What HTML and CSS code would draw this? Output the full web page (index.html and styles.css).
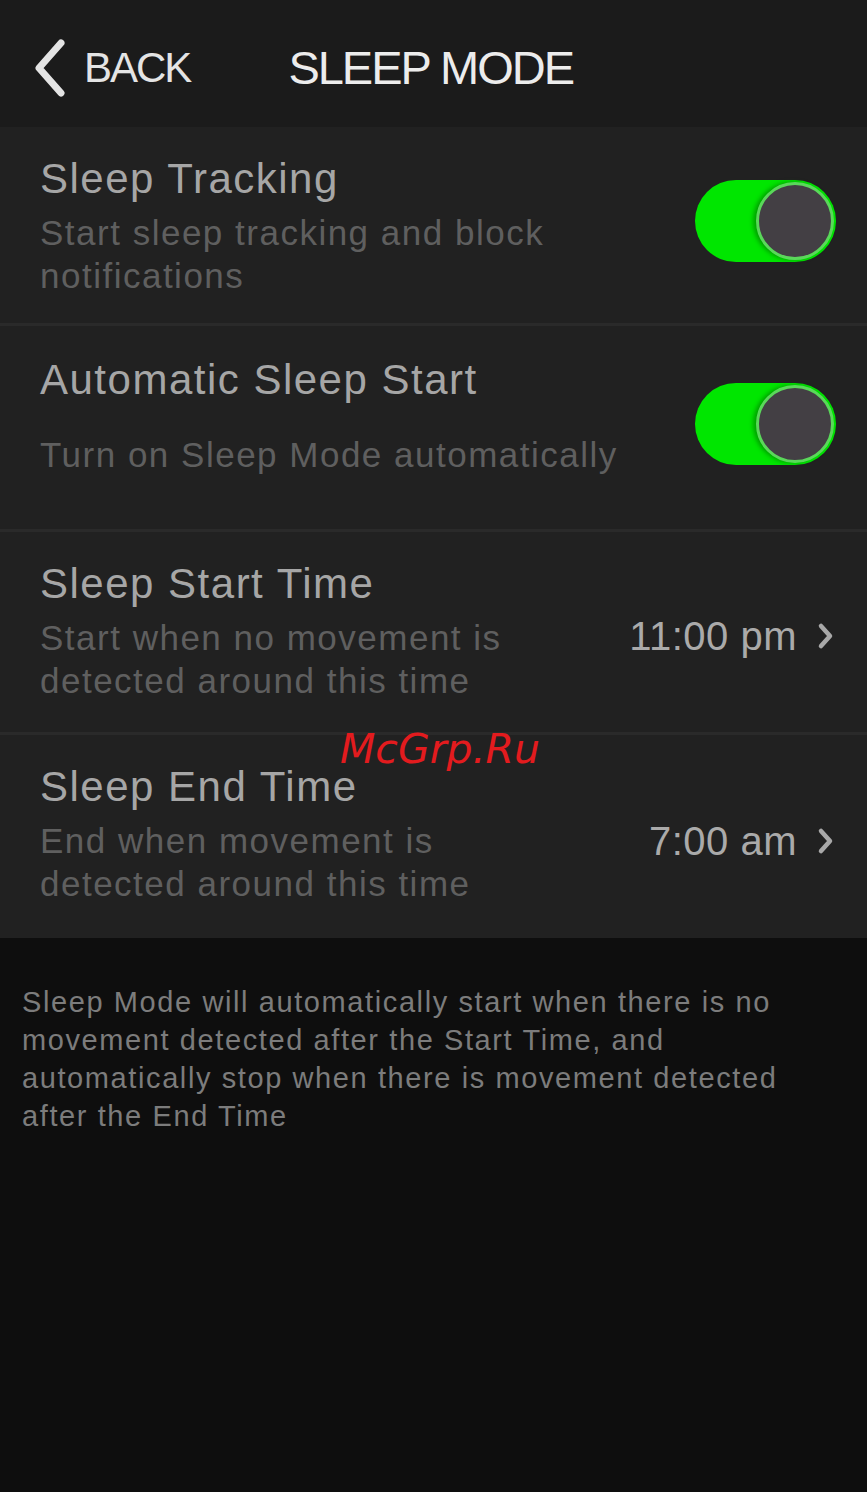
FILE: index.html
```html
<!DOCTYPE html>
<html lang="en">
<head>
    <meta charset="UTF-8" />
    <title>Sleep Mode</title>
    <link rel="stylesheet" href="styles.css">
</head>
<body>
    <div class="nav-bar">
        <a class="back-btn" href="#">
            <svg class="back-icon" width="36" height="58" viewBox="0 0 36 58">
                <path d="M30 4 L8 29 L30 54" fill="none" stroke="#e4e4e4" stroke-width="7" stroke-linecap="round" stroke-linejoin="round" />
            </svg>
            <span>BACK</span>
        </a>
        <h1 class="nav-title">SLEEP MODE</h1>
    </div>

    <div class="settings">
        <div class="setting-row">
            <div class="row-text">
                <div class="row-title">Sleep Tracking</div>
                <div class="row-sub">Start sleep tracking and block notifications</div>
            </div>
            <div class="toggle on"><span class="knob"></span></div>
        </div>

        <div class="setting-row auto-row">
            <div class="row-text">
                <div class="row-title">Automatic Sleep Start</div>
                <div class="row-sub">Turn on Sleep Mode automatically</div>
            </div>
            <div class="toggle on"><span class="knob"></span></div>
        </div>

        <div class="setting-row time-row">
            <div class="row-text">
                <div class="row-title">Sleep Start Time</div>
                <div class="row-sub">Start when no movement is detected around this time</div>
            </div>
            <div class="row-value">
                <span>11:00 pm</span>
                <svg class="chevron" width="18" height="28" viewBox="0 0 18 28">
                    <path d="M4 4 L13 14 L4 24" fill="none" stroke="#a8a8a8" stroke-width="4.5" stroke-linecap="round" stroke-linejoin="round" />
                </svg>
            </div>
        </div>

        <div class="setting-row time-row last-row">
            <div class="row-text">
                <div class="row-title">Sleep End Time</div>
                <div class="row-sub">End when movement is detected around this time</div>
            </div>
            <div class="row-value">
                <span>7:00 am</span>
                <svg class="chevron" width="18" height="28" viewBox="0 0 18 28">
                    <path d="M4 4 L13 14 L4 24" fill="none" stroke="#a8a8a8" stroke-width="4.5" stroke-linecap="round" stroke-linejoin="round" />
                </svg>
            </div>
        </div>

        <div class="watermark">McGrp.Ru</div>
    </div>

    <p class="footnote">Sleep Mode will automatically start when there is no movement detected after the Start Time, and automatically stop when there is movement detected after the End Time</p>
</body>
</html>
```

FILE: styles.css
```css
body {
    margin: 0;
    background: #0e0e0e;
    font-family: "Liberation Sans", Arial, sans-serif;
}

.nav-bar {
    display: flex;
    align-items: center;
    height: 50px;
    padding: 43px 0 34px;
    background: #1b1b1b;
}

.back-btn {
    display: flex;
    align-items: center;
    gap: 17px;
    margin-left: 31px;
    color: #e4e4e4;
    text-decoration: none;
    font-size: 42px;
    line-height: 50px;
    letter-spacing: -2px;
}

.nav-title {
    margin: 0 0 0 98px;
    color: #ececec;
    font-size: 47px;
    line-height: 50px;
    font-weight: normal;
    letter-spacing: -2px;
}

.settings {
    position: relative;
}

.setting-row {
    display: flex;
    align-items: center;
    justify-content: space-between;
    height: 196px;
    padding: 0 31px 0 40px;
    background: #212121;
    border-bottom: 3px solid #2a2a2a;
}

.setting-row.auto-row {
    height: 203px;
}

.setting-row.time-row {
    height: 200px;
}

.setting-row.last-row {
    height: 203px;
    border-bottom: none;
}

.row-text {
    align-self: flex-start;
    padding-top: 28px;
    max-width: 620px;
}

.auto-row .row-text {
    padding-top: 30px;
}

.time-row .row-text {
    max-width: 530px;
}

.row-title {
    color: #a6a6a6;
    font-size: 42px;
    line-height: 48px;
    letter-spacing: 1.5px;
}

.row-sub {
    margin-top: 8px;
    color: #5f5f5f;
    font-size: 35px;
    line-height: 43px;
    letter-spacing: 1.5px;
}

.auto-row .row-sub {
    margin-top: 29px;
}

.toggle {
    display: flex;
    justify-content: flex-end;
    align-items: center;
    width: 141px;
    height: 82px;
    margin-top: -8px;
    padding: 0 2px;
    box-sizing: border-box;
    border-radius: 41px;
    background: #00e600;
}

.knob {
    width: 72px;
    height: 72px;
    border-radius: 50%;
    background: #433f44;
    border: 3px solid #5ad85a;
    box-shadow: -3px 0 4px rgba(0, 90, 0, 0.5);
}

.row-value {
    display: flex;
    align-items: center;
    gap: 20px;
    margin-top: 8px;
    color: #aaaaaa;
    font-size: 40px;
    line-height: 48px;
    letter-spacing: 0.5px;
}

.chevron {
    margin-right: 1px;
}

.watermark {
    position: absolute;
    left: 340px;
    top: 598px;
    color: #e31b1e;
    font-family: "DejaVu Sans", sans-serif;
    font-style: italic;
    font-size: 41px;
    line-height: 48px;
}

.footnote {
    margin: 0;
    padding: 45px 60px 0 22px;
    color: #7c7c7c;
    font-size: 29px;
    line-height: 38px;
    letter-spacing: 1.6px;
}
```
